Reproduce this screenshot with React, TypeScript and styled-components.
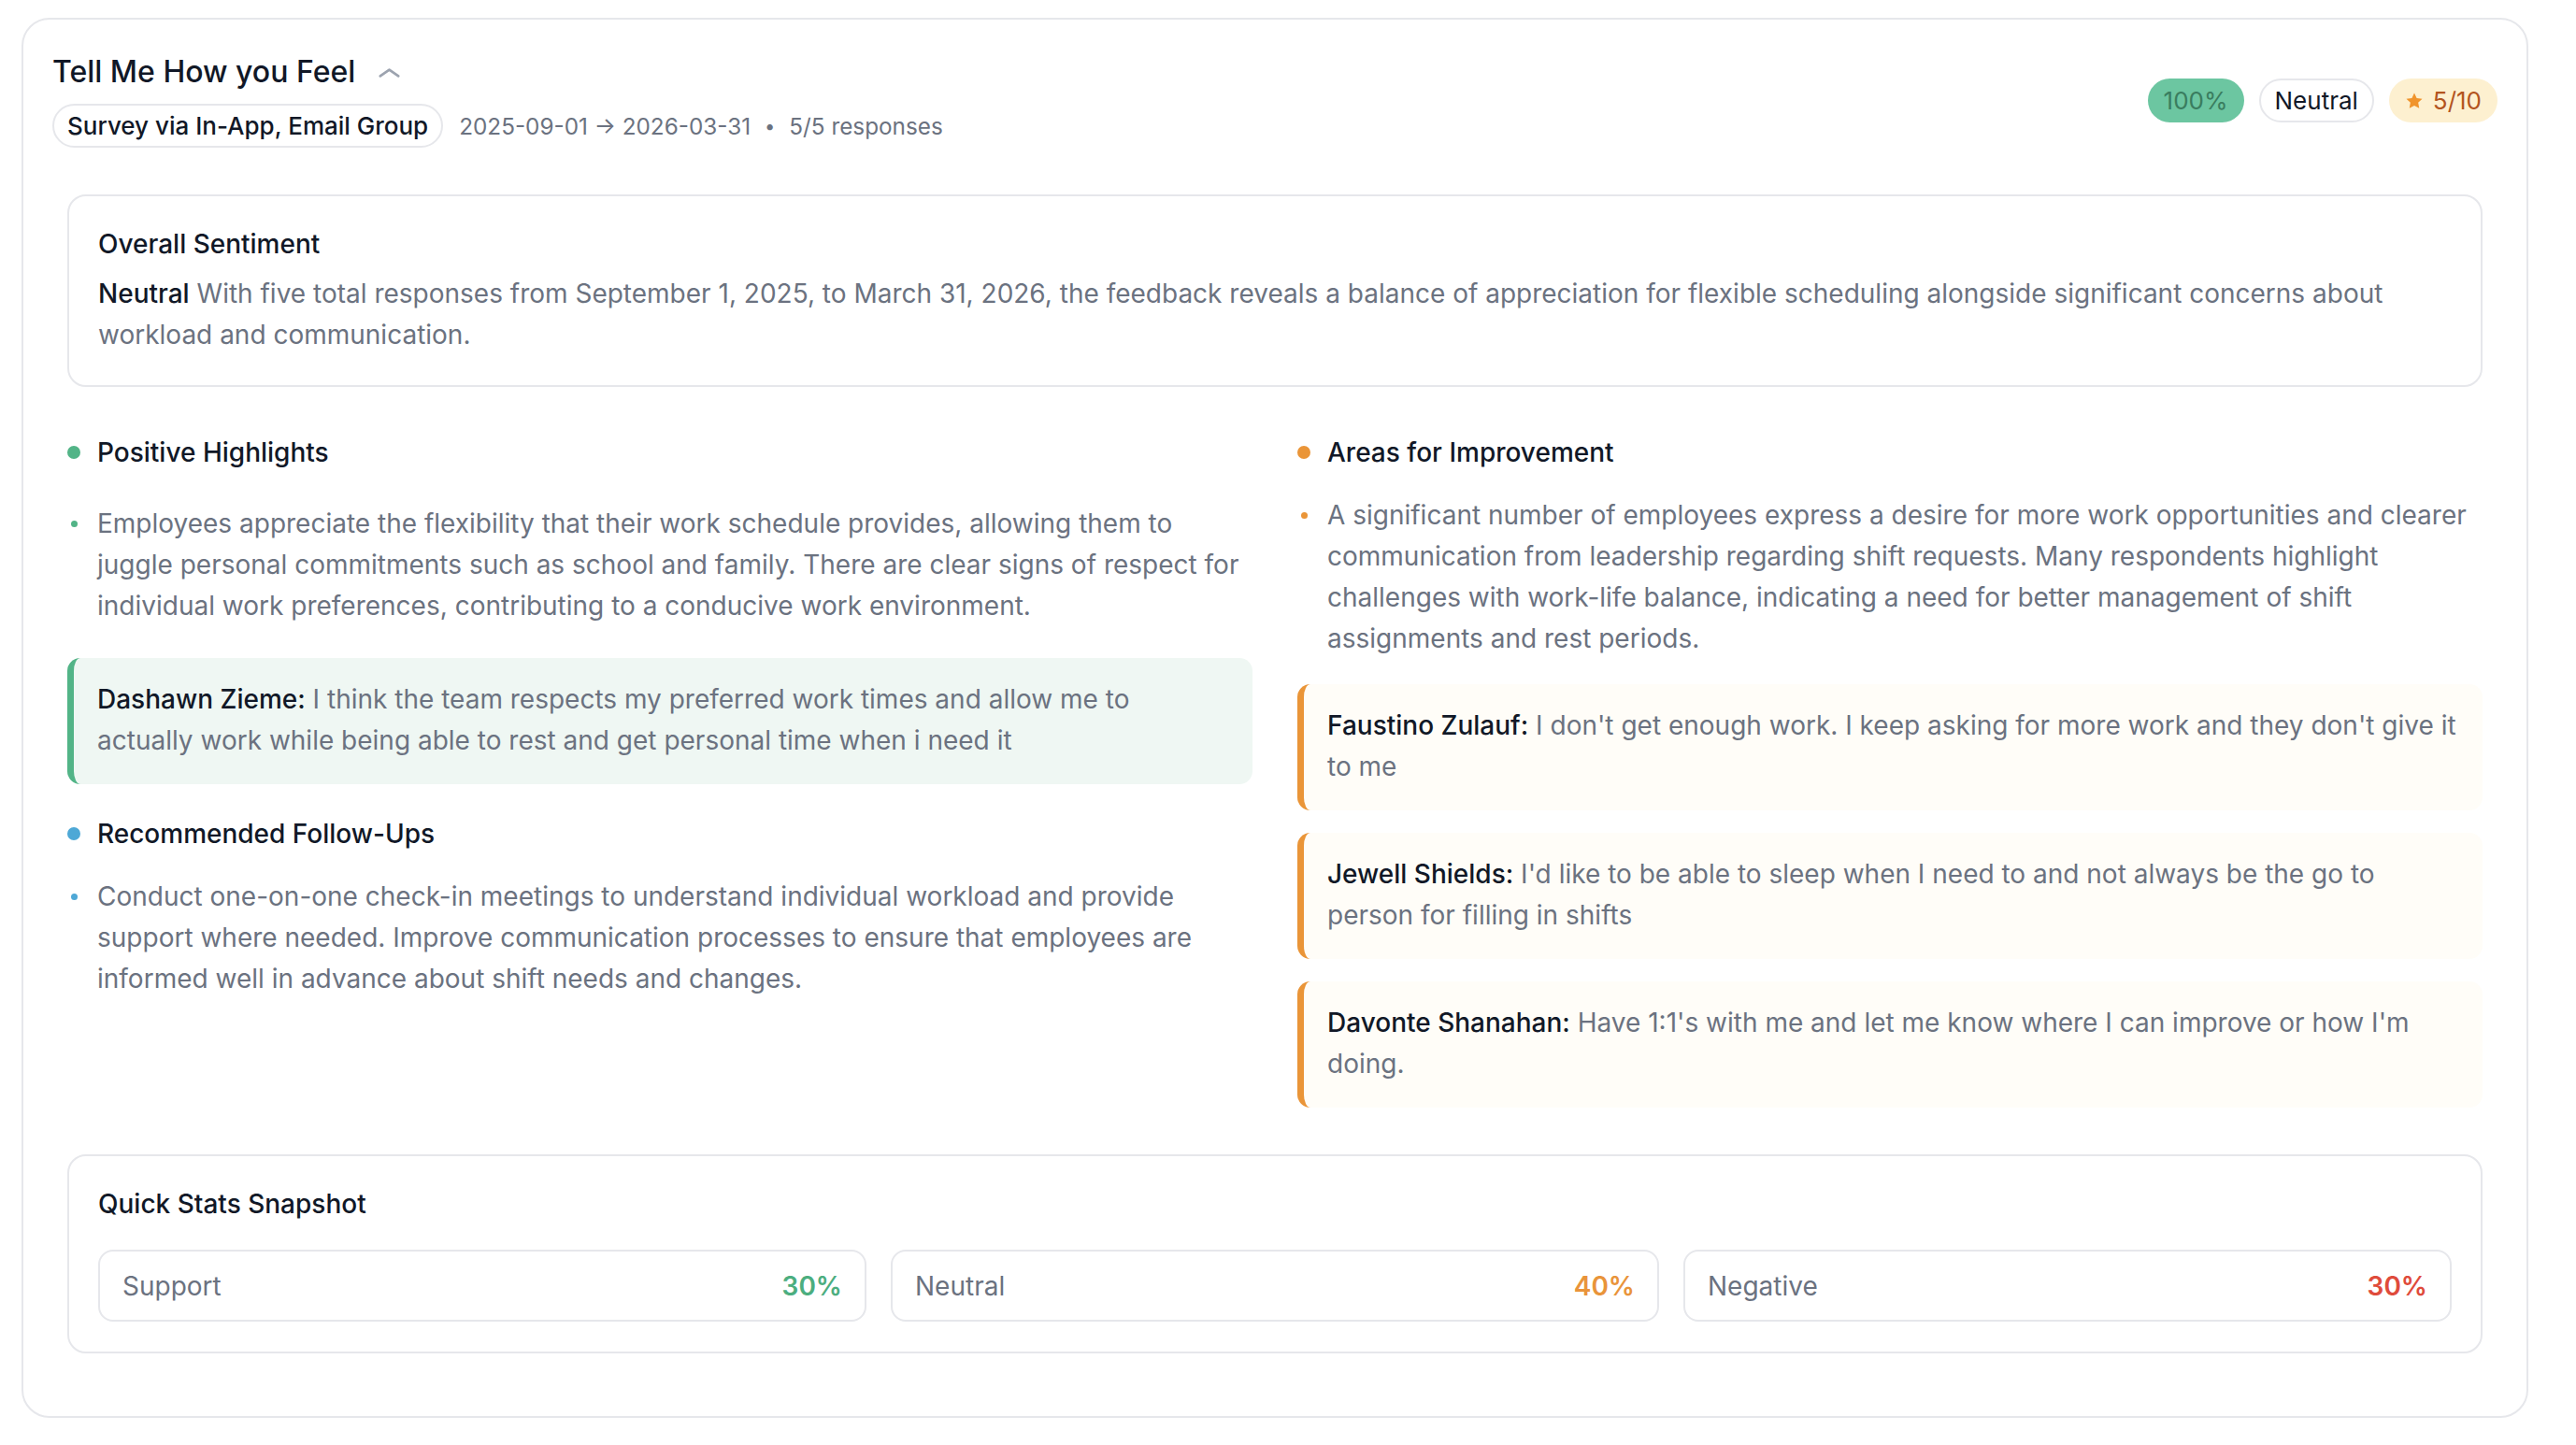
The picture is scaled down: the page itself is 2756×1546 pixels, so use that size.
import React from "react";
import styled, { createGlobalStyle } from "styled-components";

const GlobalStyle = createGlobalStyle`
  * { box-sizing: border-box; }
  html, body { margin: 0; padding: 0; background: #ffffff; }
  body {
    font-family: Inter, "Noto Sans", "Liberation Sans", sans-serif;
    color: #111827;
    -webkit-font-smoothing: antialiased;
  }
`;

const palette = {
  ink: "#111827",
  muted: "#6b7280",
  line: "#e6e7eb",
  green: "#52b487",
  orange: "#ea9538",
  blue: "#4ea8d6",
  red: "#df4b3b",
};

const Page = styled.div`
  padding: 19px 51px 31px 23px;
`;

const Card = styled.section`
  border: 2px solid ${palette.line};
  border-radius: 30px;
  background: #fff;
  padding-bottom: 67px;
`;

const Header = styled.header`
  display: flex;
  align-items: center;
  justify-content: space-between;
  padding: 36px 31px 0 31px;
`;

const HeaderMain = styled.div`
  display: flex;
  flex-direction: column;
  gap: 14px;
`;

const TitleRow = styled.div`
  display: flex;
  align-items: center;
  gap: 25px;
  height: 40px;
`;

const Title = styled.h1`
  margin: 0;
  font-size: 32px;
  font-weight: 500;
  line-height: 40px;
  color: ${palette.ink};
`;

const Chevron = styled.svg`
  width: 23px;
  height: 10px;
  margin-top: 2px;
`;

const MetaRow = styled.div`
  display: flex;
  align-items: center;
  gap: 17px;
`;

const SourcePill = styled.span`
  display: inline-flex;
  align-items: center;
  height: 47px;
  padding: 0 14px;
  border: 2px solid ${palette.line};
  border-radius: 999px;
  font-size: 26px;
  font-weight: 500;
  color: ${palette.ink};
`;

const MetaText = styled.span`
  font-size: 24.3px;
  color: ${palette.muted};
  display: inline-flex;
  align-items: center;
`;

const Dot = styled.span`
  margin: 0 15px;
  font-size: 20px;
`;

const Badges = styled.div`
  display: flex;
  align-items: center;
  gap: 16px;
`;

const Badge = styled.span<{ $tone: "score" | "plain" | "rating" }>`
  display: inline-flex;
  align-items: center;
  gap: 10px;
  height: 47px;
  padding: 0 15px;
  border-radius: 999px;
  font-size: 26px;
  font-weight: 400;
  border: 2px solid
    ${(p) => (p.$tone === "plain" ? palette.line : "transparent")};
  background: ${(p) =>
    p.$tone === "score" ? "#6cc6a1" : p.$tone === "rating" ? "#fdf0d0" : "#fff"};
  color: ${(p) =>
    p.$tone === "score" ? "#3a7d5f" : p.$tone === "rating" ? "#b3541e" : palette.ink};
`;

const Body = styled.div`
  display: flex;
  flex-direction: column;
  gap: 50px;
  padding: 50px 47px 0;
`;

const Panel = styled.div`
  border: 2px solid ${palette.line};
  border-radius: 20px;
  padding: 31px 31px 32px;
`;

const PanelTitle = styled.h2`
  margin: 0;
  font-size: 28px;
  font-weight: 500;
  line-height: 40px;
  color: ${palette.ink};
`;

const Paragraph = styled.p`
  margin: 11px 0 0;
  font-size: 28px;
  line-height: 44px;
  color: ${palette.muted};
`;

const Strong = styled.span`
  color: ${palette.ink};
  font-weight: 500;
`;

const Columns = styled.div`
  display: grid;
  grid-template-columns: 1fr 1fr;
  gap: 48px;
  align-items: start;
`;

const Column = styled.div`
  display: flex;
  flex-direction: column;
  gap: 33px;
`;

const Section = styled.div`
  display: flex;
  flex-direction: column;
`;

const SectionHead = styled.div`
  display: flex;
  align-items: center;
  gap: 18px;
  height: 40px;
  font-size: 28px;
  font-weight: 500;
  color: ${palette.ink};
`;

const HeadDot = styled.span<{ $color: string }>`
  width: 14px;
  height: 14px;
  border-radius: 50%;
  background: ${(p) => p.$color};
  flex: none;
`;

const List = styled.ul<{ $roomy?: boolean }>`
  list-style: none;
  margin: ${(p) => (p.$roomy ? "34px 0 34px" : "25px 0 27px")};
  padding: 0;
`;

const Item = styled.li`
  display: grid;
  grid-template-columns: 32px 1fr;
  font-size: 28px;
  line-height: 44px;
  color: ${palette.muted};
`;

const Bullet = styled.span<{ $color: string }>`
  width: 7px;
  height: 7px;
  margin: 19px 0 0 4px;
  border-radius: 50%;
  background: ${(p) => p.$color};
`;

const Quotes = styled.div`
  display: flex;
  flex-direction: column;
  gap: 24px;
`;

const Quote = styled.blockquote<{ $tone: "green" | "orange" }>`
  margin: 0;
  padding: 22px 24px 25px 25px;
  border-left: 7px solid ${(p) => (p.$tone === "green" ? palette.green : palette.orange)};
  border-radius: 14px;
  background: ${(p) => (p.$tone === "green" ? "#eff7f3" : "#fffdf8")};
  font-size: 28px;
  line-height: 44px;
  color: ${palette.muted};
`;

const StatsGrid = styled.div`
  display: grid;
  grid-template-columns: repeat(3, 1fr);
  gap: 26px;
  margin-top: 29px;
`;

const StatCard = styled.div`
  display: flex;
  align-items: center;
  justify-content: space-between;
  height: 77px;
  padding: 0 24px;
  border: 2px solid ${palette.line};
  border-radius: 16px;
`;

const StatLabel = styled.span`
  font-size: 28px;
  color: ${palette.muted};
`;

const StatValue = styled.span<{ $color: string }>`
  font-size: 28px;
  font-weight: 600;
  color: ${(p) => p.$color};
`;

const Star = () => (
  <svg width="20" height="20" viewBox="0 0 24 24" aria-hidden>
    <path
      d="M12 1.8l3.1 6.6 7.1.9-5.2 4.9 1.3 7.1L12 17.9l-6.3 3.4 1.3-7.1-5.2-4.9 7.1-.9z"
      fill="#f0942c"
    />
  </svg>
);

type Feedback = { name: string; text: string };

const improvementQuotes: Feedback[] = [
  {
    name: "Faustino Zulauf:",
    text: "I don't get enough work. I keep asking for more work and they don't give it to me",
  },
  {
    name: "Jewell Shields:",
    text: "I'd like to be able to sleep when I need to and not always be the go to person for filling in shifts",
  },
  {
    name: "Davonte Shanahan:",
    text: "Have 1:1's with me and let me know where I can improve or how I'm doing.",
  },
];

const stats = [
  { label: "Support", value: "30%", color: "#4cae7f" },
  { label: "Neutral", value: "40%", color: "#e9943a" },
  { label: "Negative", value: "30%", color: palette.red },
];

export default function App() {
  return (
    <>
      <GlobalStyle />
      <Page>
        <Card>
          <Header>
            <HeaderMain>
              <TitleRow>
                <Title>Tell Me How you Feel</Title>
                <Chevron viewBox="0 0 23 10" aria-hidden>
                  <polyline
                    points="1.8,8.4 11.5,1.6 21.2,8.4"
                    fill="none"
                    stroke="#9ca3af"
                    strokeWidth="2.6"
                    strokeLinecap="round"
                    strokeLinejoin="round"
                  />
                </Chevron>
              </TitleRow>
              <MetaRow>
                <SourcePill>Survey via In-App, Email Group</SourcePill>
                <MetaText>
                  2025-09-01 → 2026-03-31
                  <Dot>•</Dot>
                  5/5 responses
                </MetaText>
              </MetaRow>
            </HeaderMain>
            <Badges>
              <Badge $tone="score">100%</Badge>
              <Badge $tone="plain">Neutral</Badge>
              <Badge $tone="rating">
                <Star />
                5/10
              </Badge>
            </Badges>
          </Header>

          <Body>
            <Panel>
              <PanelTitle>Overall Sentiment</PanelTitle>
              <Paragraph>
                <Strong>Neutral</Strong> With five total responses from September 1, 2025, to
                March 31, 2026, the feedback reveals a balance of appreciation for flexible
                scheduling alongside significant concerns about workload and communication.
              </Paragraph>
            </Panel>

            <Columns>
              <Column>
                <Section>
                  <SectionHead>
                    <HeadDot $color={palette.green} />
                    Positive Highlights
                  </SectionHead>
                  <List $roomy>
                    <Item>
                      <Bullet $color={palette.green} />
                      <span>
                        Employees appreciate the flexibility that their work schedule provides,
                        allowing them to juggle personal commitments such as school and family.
                        There are clear signs of respect for individual work preferences,
                        contributing to a conducive work environment.
                      </span>
                    </Item>
                  </List>
                  <Quote $tone="green">
                    <Strong>Dashawn Zieme:</Strong> I think the team respects my preferred work
                    times and allow me to actually work while being able to rest and get personal
                    time when i need it
                  </Quote>
                </Section>

                <Section>
                  <SectionHead>
                    <HeadDot $color={palette.blue} />
                    Recommended Follow-Ups
                  </SectionHead>
                  <List>
                    <Item>
                      <Bullet $color={palette.blue} />
                      <span>
                        Conduct one-on-one check-in meetings to understand individual workload and
                        provide support where needed. Improve communication processes to ensure
                        that employees are informed well in advance about shift needs and changes.
                      </span>
                    </Item>
                  </List>
                </Section>
              </Column>

              <Column>
                <Section>
                  <SectionHead>
                    <HeadDot $color={palette.orange} />
                    Areas for Improvement
                  </SectionHead>
                  <List>
                    <Item>
                      <Bullet $color={palette.orange} />
                      <span>
                        A significant number of employees express a desire for more work
                        opportunities and clearer communication from leadership regarding shift
                        requests. Many respondents highlight challenges with work-life balance,
                        indicating a need for better management of shift assignments and rest
                        periods.
                      </span>
                    </Item>
                  </List>
                  <Quotes>
                    {improvementQuotes.map((q) => (
                      <Quote key={q.name} $tone="orange">
                        <Strong>{q.name}</Strong> {q.text}
                      </Quote>
                    ))}
                  </Quotes>
                </Section>
              </Column>
            </Columns>

            <Panel>
              <PanelTitle>Quick Stats Snapshot</PanelTitle>
              <StatsGrid>
                {stats.map((s) => (
                  <StatCard key={s.label}>
                    <StatLabel>{s.label}</StatLabel>
                    <StatValue $color={s.color}>{s.value}</StatValue>
                  </StatCard>
                ))}
              </StatsGrid>
            </Panel>
          </Body>
        </Card>
      </Page>
    </>
  );
}
